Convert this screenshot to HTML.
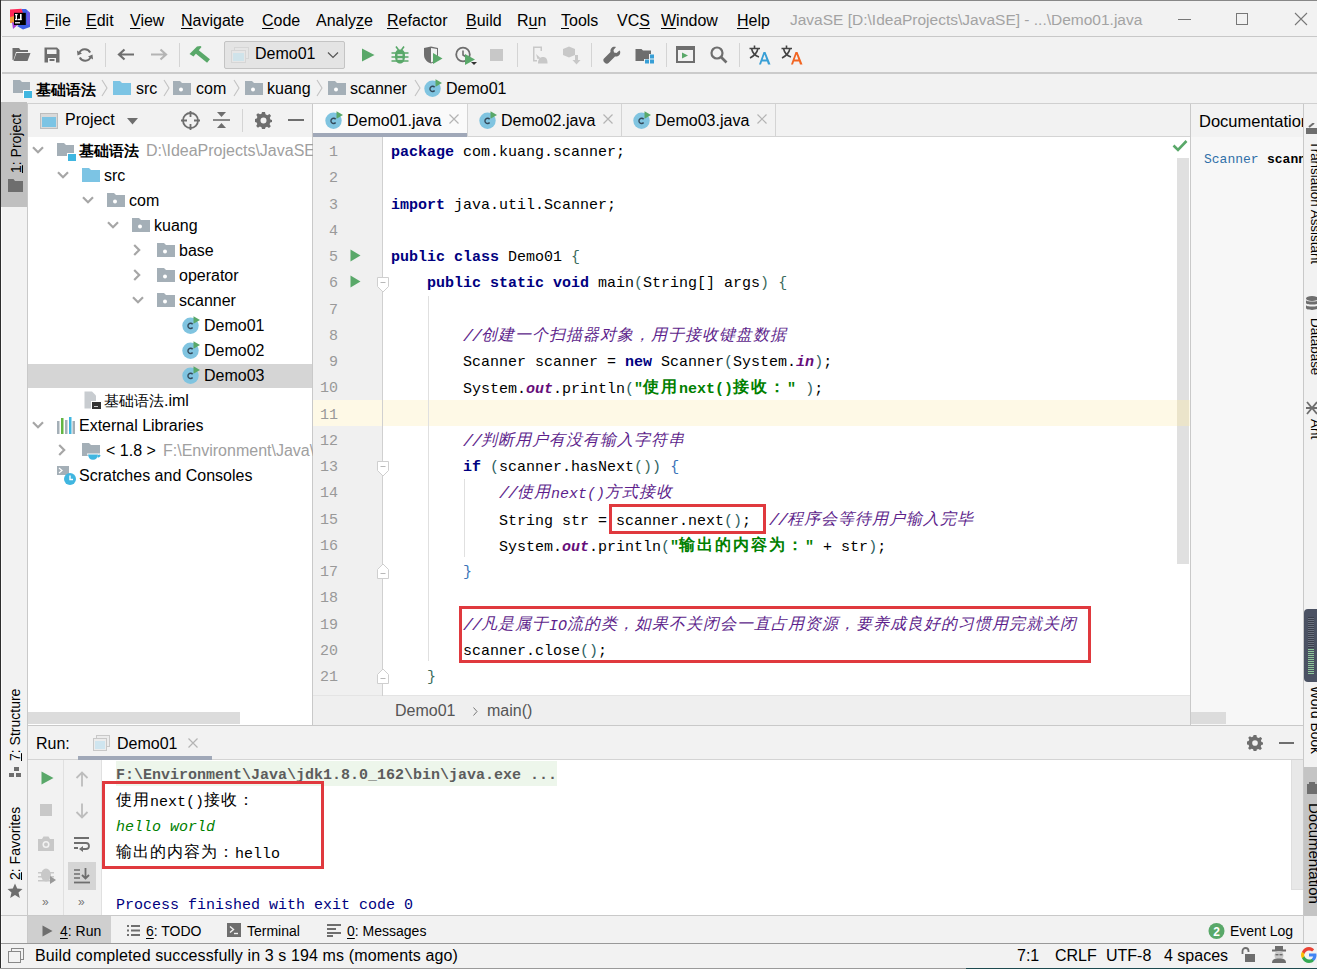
<!DOCTYPE html>
<html><head><meta charset="utf-8">
<style>
*{box-sizing:border-box;margin:0;padding:0}
html,body{width:1317px;height:969px;overflow:hidden;background:#f2f2f2}
body{position:relative;font-family:"Liberation Sans",sans-serif;font-size:16px;color:#000}
.a{position:absolute}
.t{position:absolute;white-space:pre;line-height:1}
.u{text-decoration:underline;text-underline-offset:2px}
.hl{position:absolute;height:1px;background:#c9c9c9}
.vl{position:absolute;width:1px;background:#c9c9c9}
.code{font-family:"Liberation Mono",monospace;font-size:15px}
.kw{color:#000080;font-weight:bold}
.cm{color:#5e1f8c;font-style:italic}
.str{color:#008000;font-weight:bold}
.sf{color:#660e7a;font-weight:bold;font-style:italic}
.cl{position:absolute;left:391px;white-space:pre;font-family:"Liberation Mono",monospace;font-size:15px;line-height:26px;color:#000}
.ln{position:absolute;left:300px;width:38px;text-align:right;font-family:"Liberation Mono",monospace;font-size:15px;line-height:26px;color:#999}
.sl{font-size:17px;letter-spacing:-1.2px}
.cj{font-size:16px;letter-spacing:1px;position:relative;top:-1px}
.cs{font-size:16px;letter-spacing:2px;position:relative;top:-1px}
.b1{color:#3b6b5c}.b2{color:#3b6b5c}.b3{color:#2f6363}.b4{color:#3a73b8}
</style></head><body>
<!-- window border -->
<div class="a" style="left:0;top:0;width:1317px;height:1px;background:#888"></div>
<div class="a" style="left:0;top:0;width:1px;height:969px;background:#2e2e2e"></div>
<div class="a" style="left:1px;top:1px;width:1px;height:967px;background:#fbfbfb"></div>

<!-- MENU BAR -->
<div class="a" style="left:1px;top:1px;width:1316px;height:35px;background:#f2f2f2"></div>
<div class="hl" style="left:2px;top:36px;width:1315px;background:#c8c8c8"></div>

<!-- logo -->
<svg class="a" style="left:9px;top:8px" width="22" height="22" viewBox="0 0 22 22">
<path d="M12.5 1 L17 1 L21 5 L21 19 L14 21.5 L8 18 L13 15Z" fill="#3d5fe6"/>
<path d="M18 2.5 L21 5 L21 16 L18 17Z" fill="#6b57e8"/>
<path d="M1 1.5 L12.5 0.8 L14 5 L5 9 L1 9Z" fill="#fe2857"/>
<path d="M1 9 L5.5 8 L5.5 15 L1 15Z" fill="#f59a3a"/>
<path d="M3 14 L9 16.5 L4 21Z" fill="#a63ed8"/>
<rect x="5" y="4.8" width="11.8" height="12.2" fill="#000"/>
<rect x="6" y="6" width="2.6" height="1.2" fill="#fff"/><rect x="6.6" y="6" width="1.4" height="6" fill="#fff"/><rect x="6" y="11" width="2.6" height="1.2" fill="#fff"/>
<rect x="11" y="6" width="1.6" height="5.8" fill="#fff"/><rect x="9" y="10.8" width="3.6" height="1.4" fill="#fff"/>
<rect x="6" y="14" width="5" height="1.5" fill="#d8d8d8"/>
</svg>
<div class="t" style="left:45px;top:13px"><span class="u">F</span>ile</div>
<div class="t" style="left:86px;top:13px"><span class="u">E</span>dit</div>
<div class="t" style="left:130px;top:13px"><span class="u">V</span>iew</div>
<div class="t" style="left:181px;top:13px"><span class="u">N</span>avigate</div>
<div class="t" style="left:262px;top:13px"><span class="u">C</span>ode</div>
<div class="t" style="left:316px;top:13px">Analy<span class="u">z</span>e</div>
<div class="t" style="left:387px;top:13px"><span class="u">R</span>efactor</div>
<div class="t" style="left:466px;top:13px"><span class="u">B</span>uild</div>
<div class="t" style="left:517px;top:13px">R<span class="u">u</span>n</div>
<div class="t" style="left:561px;top:13px"><span class="u">T</span>ools</div>
<div class="t" style="left:617px;top:13px">VC<span class="u">S</span></div>
<div class="t" style="left:661px;top:13px"><span class="u">W</span>indow</div>
<div class="t" style="left:737px;top:13px"><span class="u">H</span>elp</div>
<div class="t" style="left:790px;top:12px;font-size:15.5px;color:#a3a3a3">JavaSE [D:\IdeaProjects\JavaSE] - ...\Demo01.java</div>
<div class="a" style="left:1178px;top:19px;width:13px;height:1px;background:#777"></div>
<div class="a" style="left:1236px;top:13px;width:12px;height:12px;border:1px solid #777"></div>
<svg class="a" style="left:1294px;top:12px" width="14" height="14" viewBox="0 0 14 14"><path d="M1 1L13 13M13 1L1 13" stroke="#777" stroke-width="1.1"/></svg>

<!-- toolbar icons -->
<svg class="a" style="left:12px;top:47px" width="19" height="15" viewBox="0 0 19 15">
<path d="M0.5 1 H7 L8.5 3 H16 V5 H4 L1.5 13 H0.5Z" fill="#6e6e6e"/><path d="M4.5 6 H18.5 L15.5 14 H1.5Z" fill="#6e6e6e"/></svg>
<svg class="a" style="left:44px;top:47px" width="16" height="16" viewBox="0 0 16 16">
<path d="M0.5 0.5 H13 L15.5 3 V15.5 H0.5Z M3 2.5 V7 H12.5 V2.5Z M4 11 V15.5 H12 V11Z" fill="#6e6e6e" fill-rule="evenodd"/><rect x="5.5" y="12" width="5" height="2" fill="#6e6e6e"/></svg>
<svg class="a" style="left:77px;top:47px" width="16" height="16" viewBox="0 0 16 16">
<path d="M13.2 5.5 A6 6 0 0 0 2.3 6" stroke="#6e6e6e" stroke-width="2" fill="none"/><path d="M0 3.5 L5 6.5 L0.5 8.5Z" fill="#6e6e6e"/>
<path d="M2.8 10.5 A6 6 0 0 0 13.7 10" stroke="#6e6e6e" stroke-width="2" fill="none"/><path d="M16 12.5 L11 9.5 L15.5 7.5Z" fill="#6e6e6e"/></svg>
<div class="a" style="left:105px;top:43px;width:1px;height:24px;background:#d4d4d4"></div>
<svg class="a" style="left:117px;top:48px" width="18" height="13" viewBox="0 0 18 13"><path d="M17 6.5 H3 M7.5 1.5 L2 6.5 L7.5 11.5" stroke="#6e6e6e" stroke-width="2.2" fill="none"/></svg>
<svg class="a" style="left:150px;top:48px" width="18" height="13" viewBox="0 0 18 13"><path d="M1 6.5 H15 M10.5 1.5 L16 6.5 L10.5 11.5" stroke="#b4b4b4" stroke-width="2.2" fill="none"/></svg>
<div class="a" style="left:179px;top:43px;width:1px;height:24px;background:#d4d4d4"></div>
<svg class="a" style="left:189px;top:45px" width="21" height="18" viewBox="0 0 21 18"><path d="M0.5 9 L8 1.5 L11.5 1 L12.5 2 L4.5 11.5Z" fill="#59a869"/><path d="M6.5 5.5 L19.5 16" stroke="#59a869" stroke-width="4.6"/></svg>
<div class="a" style="left:224px;top:41px;width:121px;height:28px;background:#e4e4e4;border:1px solid #c4c4c4;border-radius:2px"></div>
<svg class="a" style="left:231px;top:47px" width="18" height="16" viewBox="0 0 18 16"><rect x="3.5" y="0.5" width="14" height="11" fill="#e6e6e6" stroke="#d6d6d6"/><rect x="0.5" y="3.5" width="14" height="12" fill="#e6e6e6" stroke="#d6d6d6"/><rect x="2" y="6" width="11" height="8" fill="#cfe3ea"/></svg>
<div class="t" style="left:255px;top:46px;font-size:16px">Demo01</div>
<svg class="a" style="left:327px;top:51px" width="12" height="8" viewBox="0 0 12 8"><path d="M1 1.5 L6 6.5 L11 1.5" stroke="#555" stroke-width="1.2" fill="none"/></svg>
<svg class="a" style="left:361px;top:48px" width="14" height="14" viewBox="0 0 14 14"><path d="M1 0.5 L13.5 7 L1 13.5Z" fill="#59a869"/></svg>
<svg class="a" style="left:391px;top:46px" width="18" height="18" viewBox="0 0 18 18"><path d="M5 0.5 L7.5 4 M13 0.5 L10.5 4" stroke="#59a869" stroke-width="1.6"/><path d="M9 3.5 C13 3.5 14 6 14 10 C14 15 12 17.5 9 17.5 C6 17.5 4 15 4 10 C4 6 5 3.5 9 3.5Z" fill="#59a869"/><path d="M0.5 7 H17.5 M0.5 11 H17.5 M0.5 15 H17.5" stroke="#59a869" stroke-width="1.6"/><path d="M6.5 9 H11.5 M6.5 13 H11.5" stroke="#f2f2f2" stroke-width="1.4"/></svg>
<svg class="a" style="left:423px;top:46px" width="20" height="18" viewBox="0 0 20 18"><path d="M1 2 L8 0.5 L15 2 V9 C15 14 11 16.5 8 17.5 C5 16.5 1 14 1 9Z" fill="#6e6e6e"/><path d="M8 2 L14 3 V9 C14 13 11 15.5 8 16.5Z" fill="#f2f2f2"/><path d="M10 7 L19.5 12.5 L10 18Z" fill="#59a869"/></svg>
<svg class="a" style="left:455px;top:46px" width="23" height="19" viewBox="0 0 23 19"><circle cx="8" cy="8.5" r="6.8" fill="none" stroke="#6e6e6e" stroke-width="1.8"/><path d="M8 4.5 V9 L10.5 10.5" stroke="#6e6e6e" stroke-width="1.6" fill="none"/><path d="M10 8 L20 13.5 L10 19Z" fill="#59a869"/><path d="M16 16 L22 16 L19 19Z" fill="#333"/></svg>
<div class="a" style="left:490px;top:49px;width:13px;height:12px;background:#c8c8c8"></div>
<div class="a" style="left:517px;top:43px;width:1px;height:24px;background:#d4d4d4"></div>
<svg class="a" style="left:531px;top:46px" width="17" height="18" viewBox="0 0 17 18" fill="#c8c8c8"><path d="M2 0.5 H11 V5 H9.5 V2 H3.5 V14 H6 V15.5 H2Z"/><path d="M5 8 L10 12.5 L6.5 13Z"/><path d="M7 17.5 C7 13 9 11 12 11 C15 11 16.5 13 16.5 17.5Z"/></svg>
<svg class="a" style="left:562px;top:46px" width="19" height="19" viewBox="0 0 19 19" fill="#c8c8c8"><path d="M7 0.5 L13 3 V9 L7 11.5 L1 9 V3Z"/><path d="M13 9 H16 V14 H18.5 L14.5 18.5 L10.5 14 H13Z"/></svg>
<div class="a" style="left:591px;top:43px;width:1px;height:24px;background:#d4d4d4"></div>
<svg class="a" style="left:603px;top:46px" width="18" height="18" viewBox="0 0 18 18"><path d="M16.5 4.5 L13.5 7 L11 6.5 L10.5 4 L13 1 C10 0 7 2 7.5 6 L1 12.5 C0 13.5 0 15 1.5 16.5 C3 18 4.5 18 5.5 17 L12 10.5 C16 11 18 8 17 5Z" fill="#6e6e6e"/></svg>
<svg class="a" style="left:635px;top:48px" width="20" height="16" viewBox="0 0 20 16"><path d="M0.5 1 H6.5 L8 2.5 H16 V6 H9 V13 H0.5Z" fill="#6e6e6e"/><rect x="15" y="6.5" width="4" height="4" fill="#389fd6"/><rect x="10" y="11.5" width="4" height="4" fill="#389fd6"/><rect x="15" y="11.5" width="4" height="4" fill="#389fd6"/><rect x="9" y="6" width="5" height="5" fill="#6e6e6e"/></svg>
<div class="a" style="left:666px;top:43px;width:1px;height:24px;background:#d4d4d4"></div>
<svg class="a" style="left:676px;top:46px" width="19" height="17" viewBox="0 0 19 17"><rect x="1" y="1" width="17" height="15" fill="none" stroke="#6e6e6e" stroke-width="2"/><rect x="1" y="1" width="17" height="3" fill="#6e6e6e"/><path d="M6 6.5 L12 9.5 L6 12.5Z" fill="#59a869"/></svg>
<svg class="a" style="left:710px;top:46px" width="18" height="18" viewBox="0 0 18 18"><circle cx="7" cy="7" r="5.5" fill="none" stroke="#6e6e6e" stroke-width="2.2"/><path d="M11 11 L16.5 16.5" stroke="#6e6e6e" stroke-width="2.6"/></svg>
<div class="a" style="left:739px;top:43px;width:1px;height:24px;background:#d4d4d4"></div>
<svg class="a" style="left:749px;top:45px" width="22" height="20" viewBox="0 0 22 20"><path d="M0.5 3.5 H11 M5.5 0.5 V3.5 M9 3.5 C8 8 5 11 1 13 M2.5 3.5 C3.5 8 6.5 11 10 12" stroke="#444" stroke-width="1.6" fill="none"/><path d="M10 19.5 L14.5 7 H16.5 L21.5 19.5 H19 L18 16.5 H13 L12 19.5Z M13.7 14.5 H17.3 L15.5 9.5Z" fill="#389fd6" fill-rule="evenodd"/></svg>
<svg class="a" style="left:781px;top:45px" width="22" height="20" viewBox="0 0 22 20"><path d="M0.5 3.5 H11 M5.5 0.5 V3.5 M9 3.5 C8 8 5 11 1 13 M2.5 3.5 C3.5 8 6.5 11 10 12" stroke="#444" stroke-width="1.6" fill="none"/><path d="M10 19.5 L14.5 7 H16.5 L21.5 19.5 H19 L18 16.5 H13 L12 19.5Z M13.7 14.5 H17.3 L15.5 9.5Z" fill="#f26522" fill-rule="evenodd"/></svg>

<!-- TOOLBAR -->
<div class="hl" style="left:2px;top:72px;width:1315px;height:2px;background:#cbcbcb"></div>

<!-- BREADCRUMB -->
<svg class="a" style="left:13px;top:80px" width="19" height="18" viewBox="0 0 19 18"><path d="M0 0 H7 L9 2 H17 V13 H0Z" fill="#a4afb7"/><rect x="10" y="10" width="9" height="8" fill="#fff"/><rect x="11" y="11" width="8" height="7" fill="#40b6e0"/></svg>
<div class="t" style="left:36px;top:82px;font-weight:bold;font-size:15px">基础语法</div>
<svg class="a" style="left:101px;top:79px" width="7" height="18" viewBox="0 0 7 18"><path d="M1 1 L6 9 L1 17" stroke="#c2c2c2" stroke-width="1.1" fill="none"/></svg>
<svg class="a" style="left:113px;top:81px" width="18" height="14" viewBox="0 0 18 14"><path d="M0 0 H7 L9 2 H18 V14 H0Z" fill="#7cc4e4"/></svg>
<div class="t" style="left:136px;top:81px">src</div>
<svg class="a" style="left:163px;top:79px" width="7" height="18" viewBox="0 0 7 18"><path d="M1 1 L6 9 L1 17" stroke="#c2c2c2" stroke-width="1.1" fill="none"/></svg>
<svg class="a" style="left:173px;top:81px" width="18" height="14" viewBox="0 0 18 14"><path d="M0 0 H7 L9 2 H18 V14 H0Z" fill="#a4afb7"/><circle cx="8" cy="8.5" r="2" fill="#fff"/></svg>
<div class="t" style="left:196px;top:81px">com</div>
<svg class="a" style="left:233px;top:79px" width="7" height="18" viewBox="0 0 7 18"><path d="M1 1 L6 9 L1 17" stroke="#c2c2c2" stroke-width="1.1" fill="none"/></svg>
<svg class="a" style="left:245px;top:81px" width="18" height="14" viewBox="0 0 18 14"><path d="M0 0 H7 L9 2 H18 V14 H0Z" fill="#a4afb7"/><circle cx="8" cy="8.5" r="2" fill="#fff"/></svg>
<div class="t" style="left:267px;top:81px">kuang</div>
<svg class="a" style="left:316px;top:79px" width="7" height="18" viewBox="0 0 7 18"><path d="M1 1 L6 9 L1 17" stroke="#c2c2c2" stroke-width="1.1" fill="none"/></svg>
<svg class="a" style="left:328px;top:81px" width="18" height="14" viewBox="0 0 18 14"><path d="M0 0 H7 L9 2 H18 V14 H0Z" fill="#a4afb7"/><circle cx="8" cy="8.5" r="2" fill="#fff"/></svg>
<div class="t" style="left:350px;top:81px">scanner</div>
<svg class="a" style="left:414px;top:79px" width="7" height="18" viewBox="0 0 7 18"><path d="M1 1 L6 9 L1 17" stroke="#c2c2c2" stroke-width="1.1" fill="none"/></svg>
<svg class="a" style="left:424px;top:79px" width="18" height="18" viewBox="0 0 18 18"><circle cx="8.5" cy="9.8" r="8.2" fill="#80c4e0"/><path d="M10.6 8.3 A2.6 2.6 0 1 0 10.6 11.5" stroke="#33495a" stroke-width="1.4" fill="none"/><path d="M11.5 0.3 L18 4 L11.5 7.7Z" fill="#59a869"/></svg>
<div class="t" style="left:446px;top:81px">Demo01</div>

<div class="hl" style="left:1px;top:103px;width:1316px;background:#d0d0d0"></div>

<!-- LEFT STRIPE -->
<div class="a" style="left:1px;top:102px;width:26px;height:105px;background:#c0c0c0"></div>
<div class="vl" style="left:27px;top:104px;height:839px;background:#c9c9c9"></div>

<!-- PROJECT PANEL -->
<div class="a" style="left:28px;top:137px;width:284px;height:588px;background:#fff"></div>
<div class="vl" style="left:312px;top:104px;height:621px"></div>

<!-- project header -->
<svg class="a" style="left:40px;top:113px" width="18" height="16" viewBox="0 0 18 16"><rect x="0.5" y="0.5" width="17" height="15" fill="#d9d9d9" stroke="#bdbdbd"/><rect x="2" y="4" width="14" height="10" fill="#7cc4e4"/></svg>
<div class="t" style="left:65px;top:112px">Project</div>
<svg class="a" style="left:127px;top:118px" width="11" height="7" viewBox="0 0 11 7"><path d="M0 0 H11 L5.5 6.5Z" fill="#6e6e6e"/></svg>
<svg class="a" style="left:181px;top:111px" width="19" height="19" viewBox="0 0 19 19"><circle cx="9.5" cy="9.5" r="7.5" fill="none" stroke="#6e6e6e" stroke-width="1.8"/><path d="M9.5 0 V6 M9.5 13 V19 M0 9.5 H6 M13 9.5 H19" stroke="#6e6e6e" stroke-width="1.8"/></svg>
<svg class="a" style="left:213px;top:111px" width="17" height="18" viewBox="0 0 17 18"><path d="M0 9 H17" stroke="#6e6e6e" stroke-width="1.6"/><path d="M4 1 L8.5 6 L13 1Z" fill="#6e6e6e"/><path d="M4 17 L8.5 12 L13 17Z" fill="#6e6e6e"/></svg>
<div class="a" style="left:242px;top:109px;width:1px;height:23px;background:#d4d4d4"></div>
<svg class="a" style="left:255px;top:112px" width="17" height="17" viewBox="0 0 17 17"><path fill="#6e6e6e" fill-rule="evenodd" d="M7 0 H10 L10.5 2.3 L12.3 3.2 L14.5 2 L16 3.8 L14.8 5.8 L15.4 7.4 L17 8 V10 L15.2 10.6 L14.6 12.2 L15.8 14.3 L14 16 L12 14.8 L10.4 15.4 L10 17 H7 L6.5 15.2 L4.9 14.6 L2.9 15.8 L1.2 14 L2.3 12 L1.6 10.4 L0 10 V7 L1.7 6.5 L2.4 4.9 L1.3 2.8 L3 1.2 L5 2.3 L6.5 1.7Z M8.5 5.5 A3 3 0 1 0 8.5 11.5 A3 3 0 1 0 8.5 5.5Z"/></svg>
<div class="a" style="left:288px;top:119px;width:16px;height:2px;background:#6e6e6e"></div>

<!-- left stripe labels -->
<div class="t" style="left:9px;top:173px;transform:rotate(-90deg);transform-origin:0 0;font-size:14px"><span style="text-decoration:underline">1</span>: Project</div>
<svg class="a" style="left:8px;top:179px" width="15" height="13" viewBox="0 0 15 13"><path d="M0 0 H5.5 L7 2 H15 V13 H0Z" fill="#6e6e6e"/></svg>

<!-- tree -->
<svg class="a" style="left:32px;top:146px" width="12" height="8" viewBox="0 0 12 8"><path d="M1 1.2 L6 6.2 L11 1.2" stroke="#a6a6a6" stroke-width="2.2" fill="none"/></svg>
<svg class="a" style="left:57px;top:143px" width="19" height="18" viewBox="0 0 19 18"><path d="M0 0 H7 L9 2 H17 V13 H0Z" fill="#a4afb7"/><rect x="10" y="10" width="9" height="8" fill="#fff"/><rect x="11" y="11" width="8" height="7" fill="#40b6e0"/></svg>
<div class="t" style="left:79px;top:143px;font-weight:bold;font-size:15px">基础语法</div>
<div class="t" style="left:146px;top:143px;color:#a0a0a0">D:\IdeaProjects\JavaSE\</div>

<svg class="a" style="left:57px;top:171px" width="12" height="8" viewBox="0 0 12 8"><path d="M1 1.2 L6 6.2 L11 1.2" stroke="#a6a6a6" stroke-width="2.2" fill="none"/></svg>
<svg class="a" style="left:82px;top:168px" width="18" height="14" viewBox="0 0 18 14"><path d="M0 0 H7 L9 2 H18 V14 H0Z" fill="#7cc4e4"/></svg>
<div class="t" style="left:104px;top:168px">src</div>

<svg class="a" style="left:82px;top:196px" width="12" height="8" viewBox="0 0 12 8"><path d="M1 1.2 L6 6.2 L11 1.2" stroke="#a6a6a6" stroke-width="2.2" fill="none"/></svg>
<svg class="a" style="left:107px;top:193px" width="18" height="14" viewBox="0 0 18 14"><path d="M0 0 H7 L9 2 H18 V14 H0Z" fill="#a4afb7"/><circle cx="8" cy="8.5" r="2" fill="#fff"/></svg>
<div class="t" style="left:129px;top:193px">com</div>

<svg class="a" style="left:107px;top:221px" width="12" height="8" viewBox="0 0 12 8"><path d="M1 1.2 L6 6.2 L11 1.2" stroke="#a6a6a6" stroke-width="2.2" fill="none"/></svg>
<svg class="a" style="left:132px;top:218px" width="18" height="14" viewBox="0 0 18 14"><path d="M0 0 H7 L9 2 H18 V14 H0Z" fill="#a4afb7"/><circle cx="8" cy="8.5" r="2" fill="#fff"/></svg>
<div class="t" style="left:154px;top:218px">kuang</div>

<svg class="a" style="left:133px;top:244px" width="8" height="12" viewBox="0 0 8 12"><path d="M1.2 1 L6.2 6 L1.2 11" stroke="#a6a6a6" stroke-width="2.2" fill="none"/></svg>
<svg class="a" style="left:157px;top:243px" width="18" height="14" viewBox="0 0 18 14"><path d="M0 0 H7 L9 2 H18 V14 H0Z" fill="#a4afb7"/><circle cx="8" cy="8.5" r="2" fill="#fff"/></svg>
<div class="t" style="left:179px;top:243px">base</div>

<svg class="a" style="left:133px;top:269px" width="8" height="12" viewBox="0 0 8 12"><path d="M1.2 1 L6.2 6 L1.2 11" stroke="#a6a6a6" stroke-width="2.2" fill="none"/></svg>
<svg class="a" style="left:157px;top:268px" width="18" height="14" viewBox="0 0 18 14"><path d="M0 0 H7 L9 2 H18 V14 H0Z" fill="#a4afb7"/><circle cx="8" cy="8.5" r="2" fill="#fff"/></svg>
<div class="t" style="left:179px;top:268px">operator</div>

<svg class="a" style="left:132px;top:296px" width="12" height="8" viewBox="0 0 12 8"><path d="M1 1.2 L6 6.2 L11 1.2" stroke="#a6a6a6" stroke-width="2.2" fill="none"/></svg>
<svg class="a" style="left:157px;top:293px" width="18" height="14" viewBox="0 0 18 14"><path d="M0 0 H7 L9 2 H18 V14 H0Z" fill="#a4afb7"/><circle cx="8" cy="8.5" r="2" fill="#fff"/></svg>
<div class="t" style="left:179px;top:293px">scanner</div>

<svg class="a" style="left:182px;top:316px" width="18" height="18" viewBox="0 0 18 18"><circle cx="8.5" cy="9.8" r="8.2" fill="#80c4e0"/><path d="M10.6 8.3 A2.6 2.6 0 1 0 10.6 11.5" stroke="#33495a" stroke-width="1.4" fill="none"/><path d="M11.5 0.3 L18 4 L11.5 7.7Z" fill="#59a869"/></svg>
<div class="t" style="left:204px;top:318px">Demo01</div>
<svg class="a" style="left:182px;top:341px" width="18" height="18" viewBox="0 0 18 18"><circle cx="8.5" cy="9.8" r="8.2" fill="#80c4e0"/><path d="M10.6 8.3 A2.6 2.6 0 1 0 10.6 11.5" stroke="#33495a" stroke-width="1.4" fill="none"/><path d="M11.5 0.3 L18 4 L11.5 7.7Z" fill="#59a869"/></svg>
<div class="t" style="left:204px;top:343px">Demo02</div>
<div class="a" style="left:28px;top:364px;width:284px;height:24px;background:#d5d5d5"></div>
<svg class="a" style="left:182px;top:366px" width="18" height="18" viewBox="0 0 18 18"><circle cx="8.5" cy="9.8" r="8.2" fill="#80c4e0"/><path d="M10.6 8.3 A2.6 2.6 0 1 0 10.6 11.5" stroke="#33495a" stroke-width="1.4" fill="none"/><path d="M11.5 0.3 L18 4 L11.5 7.7Z" fill="#59a869"/></svg>
<div class="t" style="left:204px;top:368px">Demo03</div>

<svg class="a" style="left:84px;top:391px" width="17" height="18" viewBox="0 0 17 18"><path d="M0.5 0.5 H8 L12 4.5 V17.5 H0.5Z" fill="#c8ccd0"/><rect x="7" y="10" width="10" height="8" fill="#fff"/><rect x="8" y="11" width="9" height="7" fill="#333"/><rect x="10" y="15" width="4" height="1" fill="#ccc"/></svg>
<div class="t" style="left:104px;top:393px"><span style="font-size:15px">基础语法</span>.iml</div>

<svg class="a" style="left:32px;top:421px" width="12" height="8" viewBox="0 0 12 8"><path d="M1 1.2 L6 6.2 L11 1.2" stroke="#a6a6a6" stroke-width="2.2" fill="none"/></svg>
<svg class="a" style="left:57px;top:417px" width="18" height="17" viewBox="0 0 18 17"><rect x="0" y="4" width="2.5" height="13" fill="#a4afb7"/><rect x="4" y="1" width="2.5" height="16" fill="#62b543"/><rect x="8" y="3" width="2.5" height="14" fill="#a4afb7"/><rect x="12" y="0" width="2.5" height="17" fill="#40b6e0"/><rect x="15.5" y="4" width="2.5" height="13" fill="#a4afb7"/></svg>
<div class="t" style="left:79px;top:418px">External Libraries</div>

<svg class="a" style="left:58px;top:444px" width="8" height="12" viewBox="0 0 8 12"><path d="M1.2 1 L6.2 6 L1.2 11" stroke="#a6a6a6" stroke-width="2.2" fill="none"/></svg>
<svg class="a" style="left:82px;top:443px" width="19" height="18" viewBox="0 0 19 18"><path d="M0 0 H7 L9 2 H18 V13 H0Z" fill="#a4afb7"/><path d="M5 10.5 H19 V11.5 H16.5 C16 15.5 14 17.5 11 17.5 C8 17.5 6 15.5 5.5 11.5 H5Z" fill="#fff"/><path d="M6 11.5 H16 C15.5 15 14 16.8 11 16.8 C8 16.8 6.5 15 6 11.5Z M16 12 H18.5 C18.5 14 17 14.5 15.5 14.5Z" fill="#40b6e0"/></svg>
<div class="t" style="left:106px;top:443px">&lt; 1.8 &gt;</div>
<div class="t" style="left:163px;top:443px;color:#a0a0a0">F:\Environment\Java\</div>

<svg class="a" style="left:57px;top:466px" width="19" height="19" viewBox="0 0 19 19"><path d="M0 0 H12 V9 H0Z" fill="#a4afb7"/><path d="M2 2 L5 4.5 L2 7" stroke="#fff" stroke-width="1.2" fill="none"/><circle cx="13" cy="13" r="6" fill="#40b6e0"/><path d="M13 9.5 V13.5 H16" stroke="#fff" stroke-width="1.4" fill="none"/></svg>
<div class="t" style="left:79px;top:468px">Scratches and Consoles</div>

<!-- project hscrollbar -->
<div class="a" style="left:28px;top:712px;width:212px;height:12px;background:#dcdcdc"></div>

<!-- EDITOR -->
<div class="a" style="left:313px;top:104px;width:877px;height:33px;background:#f2f2f2"></div>
<div class="a" style="left:313px;top:137px;width:69px;height:559px;background:#f0f0f0"></div>
<div class="a" style="left:382px;top:137px;width:808px;height:559px;background:#fff"></div>
<div class="a" style="left:313px;top:696px;width:877px;height:29px;background:#efefef"></div>
<div class="hl" style="left:313px;top:695px;width:877px;background:#e4e4e4"></div>

<!-- CODE -->
<div class="a" style="left:313px;top:400px;width:877px;height:26px;background:#fef9e6"></div>
<div class="ln" style="top:140.00px">1</div>
<div class="cl" style="top:140.00px"><span class="kw">package</span> com.kuang.scanner;</div>
<div class="ln" style="top:166.25px">2</div>
<div class="ln" style="top:192.50px">3</div>
<div class="cl" style="top:192.50px"><span class="kw">import</span> java.util.Scanner;</div>
<div class="ln" style="top:218.75px">4</div>
<div class="ln" style="top:245.00px">5</div>
<div class="cl" style="top:245.00px"><span class="kw">public class</span> Demo01 <span class="b1">{</span></div>
<div class="ln" style="top:271.25px">6</div>
<div class="cl" style="top:271.25px">    <span class="kw">public static void</span> main<span class="b2">(</span>String[] args<span class="b2">)</span> <span class="b2">{</span></div>
<div class="ln" style="top:297.50px">7</div>
<div class="ln" style="top:323.75px">8</div>
<div class="cl" style="top:323.75px">        <span class="cm"><span class="sl">//</span><span class="cj">创建一个扫描器对象，用于接收键盘数据</span></span></div>
<div class="ln" style="top:350.00px">9</div>
<div class="cl" style="top:350.00px">        Scanner scanner = <span class="kw">new</span> Scanner<span class="b3">(</span>System.<span class="sf">in</span><span class="b3">)</span>;</div>
<div class="ln" style="top:376.25px">10</div>
<div class="cl" style="top:376.25px">        System.<span class="sf">out</span>.println<span class="b3">(</span><span class="str">"<span class="cs">使用</span>next()<span class="cs">接收：</span>"</span> <span class="b3">)</span>;</div>
<div class="ln" style="top:402.50px">11</div>
<div class="ln" style="top:428.75px">12</div>
<div class="cl" style="top:428.75px">        <span class="cm"><span class="sl">//</span><span class="cj">判断用户有没有输入字符串</span></span></div>
<div class="ln" style="top:455.00px">13</div>
<div class="cl" style="top:455.00px">        <span class="kw">if</span> <span class="b3">(</span>scanner.hasNext<span class="b2">()</span><span class="b3">)</span> <span class="b4">{</span></div>
<div class="ln" style="top:481.25px">14</div>
<div class="cl" style="top:481.25px">            <span class="cm"><span class="sl">//</span><span class="cj">使用</span>next()<span class="cj">方式接收</span></span></div>
<div class="ln" style="top:507.50px">15</div>
<div class="cl" style="top:507.50px">            String str = scanner.next<span class="b3">()</span>;  <span class="cm"><span class="sl">//</span><span class="cj">程序会等待用户输入完毕</span></span></div>
<div class="ln" style="top:533.75px">16</div>
<div class="cl" style="top:533.75px">            System.<span class="sf">out</span>.println<span class="b3">(</span><span class="str">"<span class="cs">输出的内容为：</span>"</span> + str<span class="b3">)</span>;</div>
<div class="ln" style="top:560.00px">17</div>
<div class="cl" style="top:560.00px">        <span class="b4">}</span></div>
<div class="ln" style="top:586.25px">18</div>
<div class="ln" style="top:612.50px">19</div>
<div class="cl" style="top:612.50px">        <span class="cm"><span class="sl">//</span><span class="cj">凡是属于</span>IO<span class="cj">流的类，如果不关闭会一直占用资源，要养成良好的习惯用完就关闭</span></span></div>
<div class="ln" style="top:638.75px">20</div>
<div class="cl" style="top:638.75px">        scanner.close<span class="b3">()</span>;</div>
<div class="ln" style="top:665.00px">21</div>
<div class="cl" style="top:665.00px">    <span class="b2">}</span></div>

<!-- tabs -->
<div class="a" style="left:313px;top:104px;width:154px;height:29px;background:#fafafa"></div>
<div class="a" style="left:313px;top:133px;width:154px;height:4px;background:#a0a8b8"></div>
<div class="hl" style="left:467px;top:136px;width:723px;background:#d4d4d4"></div>
<div class="vl" style="left:467px;top:104px;height:33px;background:#d4d4d4"></div>
<div class="vl" style="left:621px;top:104px;height:33px;background:#d4d4d4"></div>
<div class="vl" style="left:775px;top:104px;height:33px;background:#d4d4d4"></div>
<svg class="a" style="left:325px;top:111px" width="18" height="18" viewBox="0 0 18 18"><circle cx="8.5" cy="9.8" r="8.2" fill="#80c4e0"/><path d="M10.6 8.3 A2.6 2.6 0 1 0 10.6 11.5" stroke="#33495a" stroke-width="1.4" fill="none"/><path d="M11.5 0.3 L18 4 L11.5 7.7Z" fill="#59a869"/></svg>
<div class="t" style="left:347px;top:113px">Demo01.java</div>
<svg class="a" style="left:449px;top:114px" width="10" height="10" viewBox="0 0 10 10"><path d="M0.5 0.5L9.5 9.5M9.5 0.5L0.5 9.5" stroke="#b4b4b4" stroke-width="1.2"/></svg>
<svg class="a" style="left:479px;top:111px" width="18" height="18" viewBox="0 0 18 18"><circle cx="8.5" cy="9.8" r="8.2" fill="#80c4e0"/><path d="M10.6 8.3 A2.6 2.6 0 1 0 10.6 11.5" stroke="#33495a" stroke-width="1.4" fill="none"/><path d="M11.5 0.3 L18 4 L11.5 7.7Z" fill="#59a869"/></svg>
<div class="t" style="left:501px;top:113px">Demo02.java</div>
<svg class="a" style="left:603px;top:114px" width="10" height="10" viewBox="0 0 10 10"><path d="M0.5 0.5L9.5 9.5M9.5 0.5L0.5 9.5" stroke="#b4b4b4" stroke-width="1.2"/></svg>
<svg class="a" style="left:633px;top:111px" width="18" height="18" viewBox="0 0 18 18"><circle cx="8.5" cy="9.8" r="8.2" fill="#80c4e0"/><path d="M10.6 8.3 A2.6 2.6 0 1 0 10.6 11.5" stroke="#33495a" stroke-width="1.4" fill="none"/><path d="M11.5 0.3 L18 4 L11.5 7.7Z" fill="#59a869"/></svg>
<div class="t" style="left:655px;top:113px">Demo03.java</div>
<svg class="a" style="left:757px;top:114px" width="10" height="10" viewBox="0 0 10 10"><path d="M0.5 0.5L9.5 9.5M9.5 0.5L0.5 9.5" stroke="#b4b4b4" stroke-width="1.2"/></svg>

<!-- gutter icons -->
<svg class="a" style="left:350px;top:249px" width="11" height="13" viewBox="0 0 11 13"><path d="M0.5 0.5 L10.5 6.5 L0.5 12.5Z" fill="#59a869"/></svg>
<svg class="a" style="left:350px;top:275px" width="11" height="13" viewBox="0 0 11 13"><path d="M0.5 0.5 L10.5 6.5 L0.5 12.5Z" fill="#59a869"/></svg>
<div class="vl" style="left:382px;top:137px;height:559px;background:#d0d0d0"></div>
<svg class="a" style="left:377px;top:277px" width="12" height="16" viewBox="0 0 12 16"><path d="M0.5 0.5 H11.5 V9.5 L6 15 L0.5 9.5Z" fill="#fff" stroke="#cfcfcf"/><path d="M3.5 5.5 H8.5" stroke="#b8b8b8"/></svg>
<svg class="a" style="left:377px;top:461px" width="12" height="16" viewBox="0 0 12 16"><path d="M0.5 0.5 H11.5 V9.5 L6 15 L0.5 9.5Z" fill="#fff" stroke="#cfcfcf"/><path d="M3.5 5.5 H8.5" stroke="#b8b8b8"/></svg>
<svg class="a" style="left:377px;top:563px" width="12" height="16" viewBox="0 0 12 16"><path d="M0.5 15.5 H11.5 V6.5 L6 1 L0.5 6.5Z" fill="#fff" stroke="#cfcfcf"/><path d="M3.5 10.5 H8.5" stroke="#b8b8b8"/></svg>
<svg class="a" style="left:377px;top:668px" width="12" height="16" viewBox="0 0 12 16"><path d="M0.5 15.5 H11.5 V6.5 L6 1 L0.5 6.5Z" fill="#fff" stroke="#cfcfcf"/><path d="M3.5 10.5 H8.5" stroke="#b8b8b8"/></svg>

<!-- indent guides -->
<div class="vl" style="left:428px;top:296px;height:365px;background:#e0e0e0"></div>
<div class="vl" style="left:464px;top:479px;height:78px;background:#e0e0e0"></div>

<!-- red boxes -->
<div class="a" style="left:609px;top:504px;width:157px;height:30px;border:3px solid #e0393e"></div>
<div class="a" style="left:459px;top:606px;width:632px;height:57px;border:3px solid #e0393e"></div>

<!-- checkmark + scrollbar -->
<svg class="a" style="left:1172px;top:139px" width="16" height="13" viewBox="0 0 16 13"><path d="M1.5 6.5 L6 11 L14.5 2" stroke="#59a869" stroke-width="2.6" fill="none"/></svg>
<div class="a" style="left:1177px;top:158px;width:12px;height:406px;background:#e0e0e0"></div>
<div class="a" style="left:1177px;top:400px;width:12px;height:26px;background:rgba(255,236,160,0.35)"></div>

<!-- editor breadcrumb -->
<div class="t" style="left:395px;top:703px;color:#555">Demo01</div>
<svg class="a" style="left:473px;top:707px" width="5" height="9" viewBox="0 0 5 9"><path d="M0.5 0.5 L4 4.5 L0.5 8.5" stroke="#777" stroke-width="1" fill="none"/></svg>
<div class="t" style="left:487px;top:703px;color:#555">main()</div>

<!-- DOC PANEL -->
<div class="vl" style="left:1190px;top:104px;height:621px"></div>
<div class="a" style="left:1191px;top:137px;width:112px;height:588px;background:#f7f7f7"></div>
<div class="vl" style="left:1303px;top:104px;height:839px"></div>

<!-- RUN PANEL -->
<div class="hl" style="left:28px;top:725px;width:1275px"></div>
<div class="hl" style="left:28px;top:759px;width:1275px;background:#d4d4d4"></div>
<div class="a" style="left:101px;top:760px;width:1202px;height:155px;background:#fff"></div>

<!-- BOTTOM BAR + STATUS -->
<div class="hl" style="left:1px;top:915px;width:1303px"></div>
<div class="hl" style="left:1px;top:943px;width:1316px;background:#999"></div>

<!-- doc panel -->
<div class="t" style="left:1199px;top:113px;width:104px;overflow:hidden;font-size:16.5px">Documentation</div>
<div class="t code" style="left:1204px;top:153px;font-size:13px;color:#2f6fa8">Scanner</div>
<div class="t code" style="left:1267px;top:153px;font-size:13px;font-weight:bold;width:36px;overflow:hidden">scanner</div>
<div class="a" style="left:1191px;top:712px;width:35px;height:12px;background:#dcdcdc"></div>

<!-- right stripe -->
<div class="a" style="left:1304px;top:104px;width:13px;height:839px;background:#f2f2f2"></div>
<svg class="a" style="left:1306px;top:123px" width="11" height="11" viewBox="0 0 11 11"><rect x="0" y="5" width="11" height="6" fill="#6e6e6e"/><path d="M3 4 L8 0" stroke="#6e6e6e" stroke-width="2"/></svg>
<div class="t" style="left:1322px;top:141px;transform:rotate(90deg);transform-origin:0 0;font-size:13.4px;color:#000">Translation Assistant</div>
<svg class="a" style="left:1306px;top:296px" width="11" height="15" viewBox="0 0 11 15" fill="#6e6e6e"><ellipse cx="6" cy="2.5" rx="6" ry="2.5"/><path d="M0 4 C0 6 12 6 12 4 V7 C12 9 0 9 0 7Z"/><path d="M0 9 C0 11 12 11 12 9 V12 C12 14.5 0 14.5 0 12Z"/></svg>
<div class="t" style="left:1322px;top:318px;transform:rotate(90deg);transform-origin:0 0;font-size:13.4px;color:#000">Database</div>
<svg class="a" style="left:1306px;top:401px" width="11" height="14" viewBox="0 0 11 14" fill="none" stroke="#6e6e6e" stroke-width="1.8"><path d="M1 1 L6 7 L11 1 M1 13 L6 7 L11 13 M0 7 H11"/></svg>
<div class="t" style="left:1322px;top:419px;transform:rotate(90deg);transform-origin:0 0;font-size:13.4px;color:#000">Ant</div>
<div class="a" style="left:1304px;top:609px;width:14px;height:73px;background:#4b5263;border-radius:4px 0 0 4px"></div>
<div class="a" style="left:1308px;top:617px;width:6px;height:58px;background:repeating-linear-gradient(#3a3f4b 0 1px,#6b7280 1px 2px)"></div>
<div class="a" style="left:1308px;top:648px;width:6px;height:27px;background:repeating-linear-gradient(#4b5263 0 1px,#8fc89a 1px 2px)"></div>
<div class="t" style="left:1322px;top:686px;transform:rotate(90deg);transform-origin:0 0;font-size:13.8px;color:#000">Word Book</div>
<div class="a" style="left:1304px;top:767px;width:13px;height:149px;background:#c4c4c4"></div>
<div class="a" style="left:1291px;top:760px;width:12px;height:130px;background:#e8e8e8;border-left:1px solid #dedede;border-bottom:1px solid #dedede"></div>
<svg class="a" style="left:1307px;top:782px" width="10" height="12" viewBox="0 0 10 12"><rect x="0" y="2" width="10" height="10" fill="#6e6e6e"/><rect x="2" y="0" width="6" height="3" fill="#6e6e6e"/></svg>
<div class="t" style="left:1322px;top:803px;transform:rotate(90deg);transform-origin:0 0;font-size:15px;color:#000">Documentation</div>

<!-- left stripe: structure & favorites -->
<div class="t" style="left:8px;top:761px;transform:rotate(-90deg);transform-origin:0 0;font-size:14px"><span style="text-decoration:underline">7</span>: Structure</div>
<svg class="a" style="left:9px;top:767px" width="13" height="13" viewBox="0 0 13 13" fill="#6e6e6e"><rect x="5" y="0" width="5" height="4"/><rect x="0" y="6" width="5" height="4"/><rect x="7" y="6" width="5" height="4"/></svg>
<div class="t" style="left:8px;top:880px;transform:rotate(-90deg);transform-origin:0 0;font-size:14px"><span style="text-decoration:underline">2</span>: Favorites</div>
<svg class="a" style="left:7px;top:883px" width="16" height="16" viewBox="0 0 16 16"><path d="M8 0.5 L10.2 5.5 L15.5 6 L11.5 9.5 L12.8 15 L8 12 L3.2 15 L4.5 9.5 L0.5 6 L5.8 5.5Z" fill="#6e6e6e"/></svg>

<!-- run header -->
<div class="t" style="left:36px;top:736px">Run:</div>
<svg class="a" style="left:93px;top:735px" width="17" height="16" viewBox="0 0 17 16"><rect x="3.5" y="0.5" width="13" height="11" fill="#ececec" stroke="#c8c8c8"/><rect x="0.5" y="3.5" width="13" height="12" fill="#ececec" stroke="#c8c8c8"/><rect x="2" y="6" width="10" height="8" fill="#cfe5ef"/></svg>
<div class="t" style="left:117px;top:736px">Demo01</div>
<svg class="a" style="left:188px;top:738px" width="10" height="10" viewBox="0 0 10 10"><path d="M0.5 0.5L9.5 9.5M9.5 0.5L0.5 9.5" stroke="#b4b4b4" stroke-width="1.2"/></svg>
<div class="a" style="left:78px;top:756px;width:134px;height:4px;background:#a0a8b8"></div>
<svg class="a" style="left:1247px;top:735px" width="16" height="16" viewBox="0 0 17 17"><path fill="#6e6e6e" fill-rule="evenodd" d="M7 0 H10 L10.5 2.3 L12.3 3.2 L14.5 2 L16 3.8 L14.8 5.8 L15.4 7.4 L17 8 V10 L15.2 10.6 L14.6 12.2 L15.8 14.3 L14 16 L12 14.8 L10.4 15.4 L10 17 H7 L6.5 15.2 L4.9 14.6 L2.9 15.8 L1.2 14 L2.3 12 L1.6 10.4 L0 10 V7 L1.7 6.5 L2.4 4.9 L1.3 2.8 L3 1.2 L5 2.3 L6.5 1.7Z M8.5 5.5 A3 3 0 1 0 8.5 11.5 A3 3 0 1 0 8.5 5.5Z"/></svg>
<div class="a" style="left:1279px;top:742px;width:15px;height:2px;background:#6e6e6e"></div>

<!-- run toolbars -->
<div class="vl" style="left:63px;top:760px;height:155px;background:#e0e0e0"></div>
<div class="vl" style="left:101px;top:760px;height:155px;background:#e0e0e0"></div>
<svg class="a" style="left:41px;top:771px" width="13" height="14" viewBox="0 0 13 14"><path d="M0.5 0.5 L12.5 7 L0.5 13.5Z" fill="#59a869"/></svg>
<div class="a" style="left:40px;top:804px;width:12px;height:12px;background:#c8c8c8"></div>
<svg class="a" style="left:38px;top:836px" width="16" height="15" viewBox="0 0 16 15"><path d="M0 3 H4 L5.5 0.5 H10.5 L12 3 H16 V15 H0Z" fill="#c8c8c8"/><circle cx="8" cy="8.5" r="3.5" fill="#f2f2f2"/><circle cx="8" cy="8.5" r="2" fill="#c8c8c8"/></svg>
<svg class="a" style="left:38px;top:866px" width="18" height="18" viewBox="0 0 18 18" fill="#c8c8c8"><ellipse cx="8" cy="9" rx="5" ry="6.5"/><rect x="0" y="6" width="16" height="1.5"/><rect x="0" y="10" width="16" height="1.5"/><rect x="0" y="14" width="16" height="1.5"/><path d="M12 10 L18 14 L12 18Z" fill="#999"/></svg>
<div class="t" style="left:42px;top:896px;font-size:12px;color:#777">»</div>
<svg class="a" style="left:75px;top:771px" width="14" height="16" viewBox="0 0 14 16"><path d="M7 15.5 V2 M1.5 7 L7 1.5 L12.5 7" stroke="#bdbdbd" stroke-width="1.8" fill="none"/></svg>
<svg class="a" style="left:75px;top:803px" width="14" height="16" viewBox="0 0 14 16"><path d="M7 0.5 V14 M1.5 9 L7 14.5 L12.5 9" stroke="#bdbdbd" stroke-width="1.8" fill="none"/></svg>
<svg class="a" style="left:74px;top:836px" width="16" height="16" viewBox="0 0 16 16"><path d="M0 2 H15 M0 7 H12 C16 7 16 13 12 13 H7 M0 12 H4" stroke="#6e6e6e" stroke-width="1.8" fill="none"/><path d="M9 10 L5 13 L9 16Z" fill="#6e6e6e"/></svg>
<div class="a" style="left:68px;top:862px;width:28px;height:28px;background:#d5d5d5"></div>
<svg class="a" style="left:74px;top:868px" width="16" height="16" viewBox="0 0 16 16"><path d="M0 14.5 H16" stroke="#6e6e6e" stroke-width="1.8"/><path d="M0 2 H6 M0 6 H6 M0 10 H6" stroke="#6e6e6e" stroke-width="1.6"/><path d="M11.5 0 V10 M8 7 L11.5 10.5 L15 7" stroke="#6e6e6e" stroke-width="1.8" fill="none"/></svg>
<div class="t" style="left:78px;top:896px;font-size:12px;color:#777">»</div>

<!-- console -->
<div class="a" style="left:116px;top:761px;width:441px;height:25px;background:#edf6eb"></div>
<div class="cl" style="left:116px;top:763px;color:#5c5c5c;font-weight:bold">F:\Environment\Java\jdk1.8.0_162\bin\java.exe ...</div>
<div class="cl" style="left:116px;top:789px"><span class="cs" style="letter-spacing:1px">使用</span>next()<span class="cs" style="letter-spacing:1px">接收：</span></div>
<div class="cl" style="left:116px;top:815px;color:#008000;font-style:italic">hello world</div>
<div class="cl" style="left:116px;top:841px"><span class="cs" style="letter-spacing:1px">输出的内容为：</span>hello</div>
<div class="cl" style="left:116px;top:893px;color:#000080">Process finished with exit code 0</div>
<div class="a" style="left:102px;top:781px;width:222px;height:88px;border:3px solid #e0393e"></div>

<!-- bottom tool bar -->
<div class="a" style="left:28px;top:916px;width:83px;height:27px;background:#cfcfcf"></div>
<svg class="a" style="left:42px;top:925px" width="11" height="12" viewBox="0 0 11 12"><path d="M0.5 0.5 L10.5 6 L0.5 11.5Z" fill="#6e6e6e"/></svg>
<div class="t" style="left:60px;top:924px;font-size:14px"><span class="u">4</span>: Run</div>
<svg class="a" style="left:127px;top:924px" width="13" height="13" viewBox="0 0 13 13" fill="#6e6e6e"><rect x="0" y="1" width="2" height="2"/><rect x="0" y="5.5" width="2" height="2"/><rect x="0" y="10" width="2" height="2"/><rect x="4" y="1" width="9" height="2"/><rect x="4" y="5.5" width="9" height="2"/><rect x="4" y="10" width="9" height="2"/></svg>
<div class="t" style="left:146px;top:924px;font-size:14px"><span class="u">6</span>: TODO</div>
<svg class="a" style="left:227px;top:923px" width="14" height="14" viewBox="0 0 14 14"><rect x="0" y="0" width="14" height="14" fill="#6e6e6e"/><path d="M3 3.5 L6.5 6.5 L3 9.5" stroke="#f2f2f2" stroke-width="1.4" fill="none"/><path d="M7 10.5 H11" stroke="#f2f2f2" stroke-width="1.4"/></svg>
<div class="t" style="left:247px;top:924px;font-size:14px">Terminal</div>
<svg class="a" style="left:327px;top:924px" width="14" height="13" viewBox="0 0 14 13" fill="#6e6e6e"><rect x="0" y="0" width="14" height="2"/><rect x="0" y="4" width="9" height="2"/><rect x="0" y="8" width="14" height="2"/><rect x="0" y="11" width="6" height="2"/></svg>
<div class="t" style="left:347px;top:924px;font-size:14px"><span class="u">0</span>: Messages</div>
<svg class="a" style="left:1208px;top:923px" width="17" height="16" viewBox="0 0 17 16"><circle cx="8.5" cy="8" r="8" fill="#59a869"/><text x="8.5" y="12.5" text-anchor="middle" font-family="Liberation Sans" font-weight="bold" font-size="12" fill="#fff">2</text></svg>
<div class="t" style="left:1230px;top:924px;font-size:14px">Event Log</div>

<!-- status bar -->
<svg class="a" style="left:8px;top:948px" width="16" height="15" viewBox="0 0 16 15"><rect x="3.5" y="0.5" width="12" height="11" fill="none" stroke="#888"/><rect x="0.5" y="3.5" width="12" height="11" fill="#f2f2f2" stroke="#888"/></svg>
<div class="t" style="left:35px;top:948px;font-size:16px;letter-spacing:0.12px">Build completed successfully in 3 s 194 ms (moments ago)</div>
<div class="t" style="left:1017px;top:948px;font-size:16px">7:1</div>
<div class="t" style="left:1055px;top:948px;font-size:16px">CRLF</div>
<div class="t" style="left:1106px;top:948px;font-size:16px">UTF-8</div>
<div class="t" style="left:1164px;top:948px;font-size:16px">4 spaces</div>
<svg class="a" style="left:1241px;top:947px" width="14" height="15" viewBox="0 0 14 15"><path d="M1.5 7 V4 A3 3 0 0 1 7.5 4 V5" stroke="#6e6e6e" stroke-width="1.8" fill="none"/><rect x="4" y="7" width="10" height="8" fill="#6e6e6e"/></svg>
<svg class="a" style="left:1271px;top:946px" width="16" height="17" viewBox="0 0 16 17" fill="#6e6e6e"><rect x="4" y="0" width="8" height="4"/><rect x="1" y="3.5" width="14" height="2"/><circle cx="8" cy="9.5" r="4.5" fill="#c8c8c8"/><rect x="4.5" y="8" width="3" height="1.4"/><rect x="8.5" y="8" width="3" height="1.4"/><path d="M1 17 C1 13 4 12.5 8 12.5 C12 12.5 15 13 15 17Z"/></svg>
<svg class="a" style="left:1301px;top:947px" width="16" height="16" viewBox="0 0 16 16"><path d="M15.5 8.2 C15.5 7.6 15.4 7 15.3 6.5 H8 V9.5 H12.2 C12 10.5 11.4 11.3 10.6 11.9 V13.8 H13 C14.6 12.4 15.5 10.4 15.5 8.2Z" fill="#4285f4"/><path d="M8 16 C10.2 16 12 15.3 13 13.8 L10.6 11.9 C10 12.3 9.1 12.6 8 12.6 C5.9 12.6 4.1 11.2 3.5 9.3 H1 V11.2 C2.3 14 5 16 8 16Z" fill="#34a853"/><path d="M3.5 9.3 C3.3 8.8 3.2 8.4 3.2 8 C3.2 7.6 3.3 7.1 3.5 6.7 V4.8 H1 C0.4 5.8 0 6.9 0 8 C0 9.1 0.4 10.2 1 11.2Z" fill="#fbbc05"/><path d="M8 3.4 C9.3 3.4 10.3 3.8 11.1 4.6 L13.1 2.5 C12 1.3 10.2 0 8 0 C5 0 2.3 2 1 4.8 L3.5 6.7 C4.1 4.8 5.9 3.4 8 3.4Z" fill="#ea4335"/></svg>

<div class="a" style="left:0;top:968px;width:966px;height:1px;background:#9a9a9a"></div>
<div class="a" style="left:966px;top:968px;width:351px;height:1px;background:#1e4a50"></div>
</body></html>
